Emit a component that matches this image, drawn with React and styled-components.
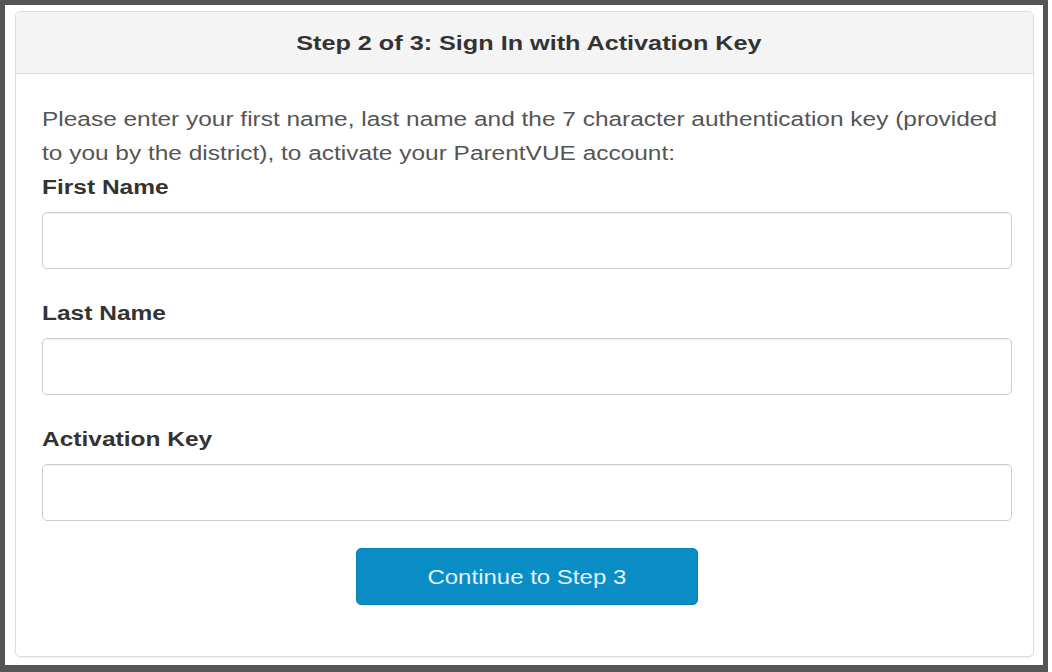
import React from 'react';
import styled, { createGlobalStyle } from 'styled-components';

const GlobalStyle = createGlobalStyle`
  html, body {
    margin: 0;
    padding: 0;
    background: #ffffff;
  }
  body {
    font-family: "Liberation Sans", Arial, sans-serif;
  }
`;

// the source shot is stretched sideways, so text gets widened to match
const Wide = styled.span`
  display: inline-block;
  white-space: nowrap;
  transform: scaleX(${(p) => p.$scale || 1.2});
  transform-origin: ${(p) => p.$origin || 'center'};
`;

const Frame = styled.div`
  box-sizing: border-box;
  width: 1048px;
  height: 672px;
  border: 5px solid #555555;
  border-bottom-width: 7px;
  background: #ffffff;
  padding: 6px 9px 0 10px;
`;

const Panel = styled.div`
  box-sizing: border-box;
  width: 1019px;
  height: 646px;
  border: 1px solid #dcdcdc;
  border-radius: 5px;
  box-shadow: 0 1px 2px rgba(0, 0, 0, 0.06);
  overflow: hidden;
  display: flex;
  flex-direction: column;
`;

const Header = styled.div`
  height: 61px;
  background: #f4f4f4;
  border-bottom: 1px solid #dcdcdc;
  display: flex;
  align-items: center;
  justify-content: center;
  padding-left: 8px;
  font-size: 21px;
  font-weight: bold;
  color: #333333;
`;

const Body = styled.div`
  padding: 28px 21px 0 26px;
`;

const Intro = styled.p`
  margin: 0;
  width: 800px;
  font-size: 20px;
  line-height: 34px;
  color: #555555;
  transform: scaleX(1.222);
  transform-origin: left top;
`;

const Field = styled.div`
  margin-bottom: 27px;
`;

const Label = styled.label`
  display: block;
  font-size: 20px;
  line-height: 34px;
  font-weight: bold;
  color: #333333;
  margin-bottom: 8px;
`;

const Input = styled.input`
  box-sizing: border-box;
  display: block;
  width: 970px;
  height: 57px;
  border: 1px solid #cccccc;
  border-radius: 5px;
  box-shadow: inset 0 1px 1px rgba(0, 0, 0, 0.05);
  font-size: 20px;
  padding: 0 14px;
  outline: none;
`;

const Actions = styled.div`
  width: 970px;
  display: flex;
  justify-content: center;
`;

const Button = styled.button`
  width: 342px;
  height: 57px;
  padding-top: 3px;
  background: #0a8dc4;
  border: 1px solid #0882b6;
  border-radius: 5px;
  color: #e3f1f9;
  font-family: "Liberation Sans", Arial, sans-serif;
  font-size: 20px;
  cursor: pointer;
`;

const fields = ['First Name', 'Last Name', 'Activation Key'];

const App = () => {
  return (
    <>
      <GlobalStyle />
      <Frame>
        <Panel>
          <Header>
            <Wide>Step 2 of 3: Sign In with Activation Key</Wide>
          </Header>
          <Body>
            <Intro>
              Please enter your first name, last name and the 7 character authentication key (provided
              to you by the district), to activate your ParentVUE account:
            </Intro>
            {fields.map((name) => (
              <Field key={name}>
                <Label>
                  <Wide $origin="left" $scale={1.225}>{name}</Wide>
                </Label>
                <Input type="text" />
              </Field>
            ))}
            <Actions>
              <Button>
                <Wide>Continue to Step 3</Wide>
              </Button>
            </Actions>
          </Body>
        </Panel>
      </Frame>
    </>
  );
};

export default App;
